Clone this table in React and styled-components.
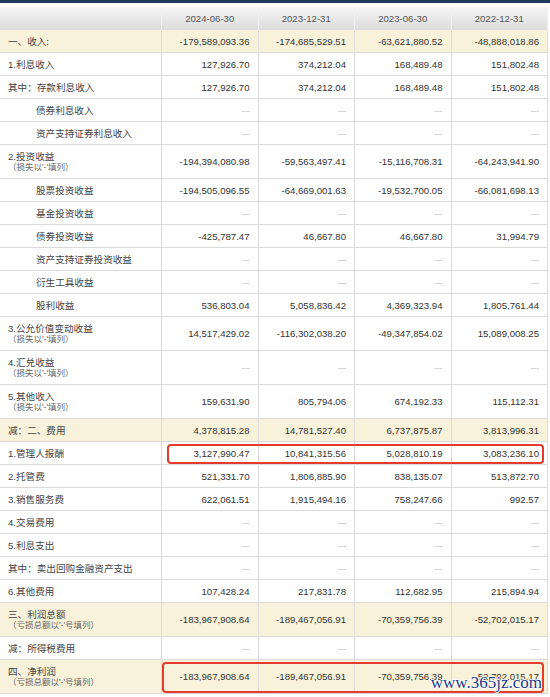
import React from "react";
import styled, { createGlobalStyle } from "styled-components";

const GlobalStyle = createGlobalStyle`
  body {
    margin: 0;
    background: #fff;
    font-family: "Liberation Sans", "Noto Sans CJK SC", sans-serif;
  }
`;

const Page = styled.div`
  position: relative;
  width: 550px;
  height: 697px;
  overflow: hidden;
  border-top: 3px solid #1f3a5c;
  box-sizing: border-box;
  padding-top: 4px;
`;

const Table = styled.div`
  width: 548px;
  display: flex;
  flex-direction: column;
`;

const Row = styled.div`
  position: relative;
  display: grid;
  grid-template-columns: 162px repeat(4, 1fr);
  height: ${({ tall }) => (tall ? "34px" : "23px")};
  background: ${({ yellow }) => (yellow ? "#f8f2da" : "#fff")};
`;

const HeadRow = styled(Row)`
  background: linear-gradient(#f5f5f5, #dcdcdc);
`;

const HeadCell = styled.div`
  display: flex;
  align-items: center;
  justify-content: center;
  border-right: 1px solid #f0f0f0;
  color: #555;
  font-size: 9.6px;
`;

const Cell = styled.div`
  display: flex;
  align-items: center;
  justify-content: flex-end;
  padding-right: 8px;
  border-right: 1px solid #dadada;
  border-bottom: 1px solid #dadada;
  color: ${({ empty }) => (empty ? "#aaa" : "#333")};
  font-size: ${({ empty }) => (empty ? "8px" : "9.6px")};
`;

const LabelCell = styled.div`
  display: flex;
  flex-direction: column;
  justify-content: center;
  padding-left: ${({ indent }) => (indent ? "36px" : "8px")};
  border-right: 1px solid #dadada;
  border-bottom: 1px solid #dadada;
  color: #444;
  font-size: 9.6px;
  line-height: 11px;
`;

const SubNote = styled.span`
  font-size: 8.5px;
  line-height: 10px;
  color: #666;
`;

const Highlight = styled.span`
  position: absolute;
  left: ${({ left }) => left}px;
  right: 4px;
  top: 2px;
  bottom: 1px;
  border: 2px solid #e53a2e;
  border-radius: 4px;
  pointer-events: none;
`;

const Watermark = styled.div`
  position: absolute;
  right: 8px;
  bottom: 4px;
  font-family: "Liberation Serif", serif;
  font-size: 17px;
  color: #1b3a8c;
  text-shadow: 1px 0 #fff, -1px 0 #fff, 0 1px #fff, 0 -1px #fff;
`;

const D = "---";

const rows = [
  { label: "一、收入:", yellow: true, values: ["-179,589,093.36", "-174,685,529.51", "-63,621,880.52", "-48,888,018.86"] },
  { label: "1.利息收入", values: ["127,926.70", "374,212.04", "168,489.48", "151,802.48"] },
  { label: "其中：存款利息收入", values: ["127,926.70", "374,212.04", "168,489.48", "151,802.48"] },
  { label: "债券利息收入", indent: true, values: [D, D, D, D] },
  { label: "资产支持证券利息收入", indent: true, values: [D, D, D, D] },
  { label: "2.投资收益", sub: "（损失以'-'填列）", values: ["-194,394,080.98", "-59,563,497.41", "-15,116,708.31", "-64,243,941.90"] },
  { label: "股票投资收益", indent: true, values: ["-194,505,096.55", "-64,669,001.63", "-19,532,700.05", "-66,081,698.13"] },
  { label: "基金投资收益", indent: true, values: [D, D, D, D] },
  { label: "债券投资收益", indent: true, values: ["-425,787.47", "46,667.80", "46,667.80", "31,994.79"] },
  { label: "资产支持证券投资收益", indent: true, values: [D, D, D, D] },
  { label: "衍生工具收益", indent: true, values: [D, D, D, D] },
  { label: "股利收益", indent: true, values: ["536,803.04", "5,058,836.42", "4,369,323.94", "1,805,761.44"] },
  { label: "3.公允价值变动收益", sub: "（损失以'-'填列）", values: ["14,517,429.02", "-116,302,038.20", "-49,347,854.02", "15,089,008.25"] },
  { label: "4.汇兑收益", sub: "（损失以'-'填列）", values: [D, D, D, D] },
  { label: "5.其他收入", sub: "（损失以'-'填列）", values: ["159,631.90", "805,794.06", "674,192.33", "115,112.31"] },
  { label: "减：二、费用", yellow: true, values: ["4,378,815.28", "14,781,527.40", "6,737,875.87", "3,813,996.31"] },
  { label: "1.管理人报酬", highlight: 167, values: ["3,127,990.47", "10,841,315.56", "5,028,810.19", "3,083,236.10"] },
  { label: "2.托管费", values: ["521,331.70", "1,806,885.90", "838,135.07", "513,872.70"] },
  { label: "3.销售服务费", values: ["622,061.51", "1,915,494.16", "758,247.66", "992.57"] },
  { label: "4.交易费用", values: [D, D, D, D] },
  { label: "5.利息支出", values: [D, D, D, D] },
  { label: "其中：卖出回购金融资产支出", values: [D, D, D, D] },
  { label: "6.其他费用", values: ["107,428.24", "217,831.78", "112,682.95", "215,894.94"] },
  { label: "三、利润总额", sub: "（亏损总额以'-'号填列）", yellow: true, values: ["-183,967,908.64", "-189,467,056.91", "-70,359,756.39", "-52,702,015.17"] },
  { label: "减：所得税费用", values: [D, D, D, D] },
  { label: "四、净利润", sub: "（亏损总额以'-'号填列）", yellow: true, highlight: 162, values: ["-183,967,908.64", "-189,467,056.91", "-70,359,756.39", "-52,702,015.17"] },
];

const dates = ["2024-06-30", "2023-12-31", "2023-06-30", "2022-12-31"];

export default function App() {
  return (
    <>
      <GlobalStyle />
      <Page>
        <Table>
          <HeadRow>
            <HeadCell />
            {dates.map((d) => (
              <HeadCell key={d}>{d}</HeadCell>
            ))}
          </HeadRow>
          {rows.map((r) => (
            <Row key={r.label} tall={!!r.sub} yellow={r.yellow}>
              <LabelCell indent={r.indent}>
                <span>{r.label}</span>
                {r.sub && <SubNote>{r.sub}</SubNote>}
              </LabelCell>
              {r.values.map((v, i) => (
                <Cell key={i} empty={v === D}>
                  {v}
                </Cell>
              ))}
              {r.highlight && <Highlight left={r.highlight} />}
            </Row>
          ))}
        </Table>
        <Watermark>www.365jz.com</Watermark>
      </Page>
    </>
  );
}
